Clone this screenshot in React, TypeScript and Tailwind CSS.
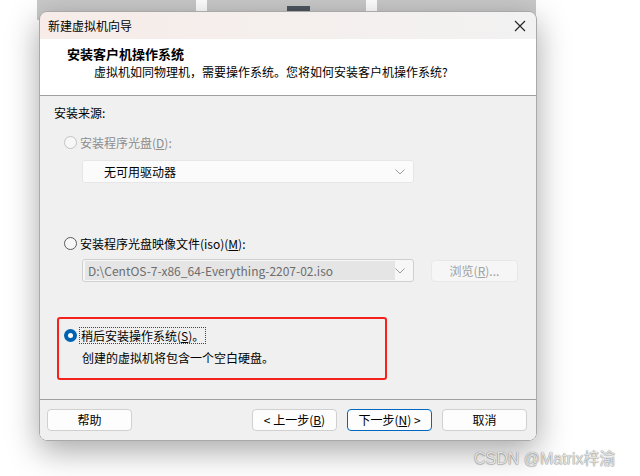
import React from "react"

const font = { fontFamily: '"Noto Sans CJK SC", "Noto Sans", sans-serif' }

const Radio = ({ checked, disabled }: { checked?: boolean; disabled?: boolean }) => {
    if (checked) {
        return (
            <span className="flex h-[13px] w-[13px] shrink-0 items-center justify-center rounded-full bg-[#0063b1]">
                <span className="h-[5px] w-[5px] rounded-full bg-white" />
            </span>
        )
    }
    return (
        <span
            className={
                disabled
                    ? "h-[13px] w-[13px] shrink-0 rounded-full border border-[#c2c2c2] bg-[#f7f7f7]"
                    : "h-[13px] w-[13px] shrink-0 rounded-full border border-[#5a5a5a] bg-[#f7f7f7]"
            }
        />
    )
}

const Chevron = () => (
    <svg width="10" height="6" viewBox="0 0 10 6" className="shrink-0">
        <path d="M0.5 0.5 L5 5 L9.5 0.5" fill="none" stroke="#9a9a9a" strokeWidth="1" />
    </svg>
)

const Button = ({ children, primary }: { children: React.ReactNode; primary?: boolean }) => (
    <button
        className={
            primary
                ? "flex h-[22px] w-[85px] items-center justify-center rounded-[4px] border border-[#0067c0] bg-[#fdfdfd] text-[12px] text-black"
                : "flex h-[22px] w-[85px] items-center justify-center rounded-[4px] border border-[#d0d0d0] bg-[#fdfdfd] text-[12px] text-black"
        }
    >
        {children}
    </button>
)

export default function App() {
    return (
        <div className="relative h-[476px] w-[640px] overflow-hidden bg-white" style={font}>
            {/* windows behind the dialog */}
            <div className="flex h-[20px] gap-[11px] pl-[37px]">
                <div className="w-[159px] bg-[#c9c9c9]" />
                <div className="relative w-[159px] bg-[#c9c9c9]">
                    <div className="absolute left-[80px] top-[6px] h-[14px] w-[23px] bg-[#4d5560]" />
                </div>
                <div className="w-[159px] bg-[#c9c9c9]" />
            </div>

            <div className="absolute left-[39px] top-[11px] flex h-[430px] w-[498px] flex-col overflow-hidden rounded-[8px] border border-[#a9a9a9] shadow-[0_10px_32px_rgba(0,0,0,0.35)]">
                {/* title bar */}
                <div className="flex h-[27px] shrink-0 items-center justify-between bg-gradient-to-r from-[#f7ece8] to-[#f2f2f2] pl-[8px] pr-[10px]">
                    <span className="text-[12px] text-black">新建虚拟机向导</span>
                    <svg width="12" height="12" viewBox="0 0 12 12">
                        <path d="M1 1 L11 11 M11 1 L1 11" stroke="#222" strokeWidth="1.1" />
                    </svg>
                </div>

                {/* header */}
                <div className="h-[57px] shrink-0 border-b border-[#a0a0a0] bg-white pl-[27px] pt-[6px]">
                    <div className="text-[13px] font-bold leading-[18px] text-black">安装客户机操作系统</div>
                    <div className="pl-[27px] text-[12px] leading-[18px] text-black">
                        虚拟机如同物理机，需要操作系统。您将如何安装客户机操作系统?
                    </div>
                </div>

                {/* body */}
                <div className="flex flex-1 flex-col bg-[#f0f0f0] pl-[14px]">
                    <div className="mt-[8px] text-[12px] leading-[17px] text-black">安装来源:</div>

                    <div className="mt-[13px] flex items-center gap-[3px] pl-[10px] text-[12px] leading-[17px] text-[#8d8d8d]">
                        <Radio disabled />
                        <span>
                            安装程序光盘(<span className="underline">D</span>):
                        </span>
                    </div>
                    <div className="ml-[28px] mt-[9px] flex h-[23px] w-[332px] items-center justify-between rounded-[3px] border border-[#e6e6e6] bg-[#fbfbfb] pl-[21px] pr-[8px] text-[12px] text-black">
                        <span>无可用驱动器</span>
                        <Chevron />
                    </div>

                    <div className="mt-[52px] flex items-center gap-[3px] pl-[10px] text-[12px] leading-[17px] text-black">
                        <Radio />
                        <span>
                            安装程序光盘映像文件(iso)(<span className="underline">M</span>):
                        </span>
                    </div>
                    <div className="mt-[7px] flex items-center gap-[17px]">
                        <div className="ml-[28px] flex h-[23px] w-[332px] items-center justify-between rounded-[3px] border border-[#cfcfcf] bg-[#f7f7f7] pl-[2px] pr-[8px]">
                            <span className="flex h-[19px] w-[310px] items-center bg-[#e5e5e5] pl-[3px] text-[12px] text-[#6d6d6d]">
                                D:\CentOS-7-x86_64-Everything-2207-02.iso
                            </span>
                            <Chevron />
                        </div>
                        <div className="flex h-[22px] w-[87px] items-center justify-center rounded-[4px] border border-[#e8e8e8] bg-[#f6f6f6] text-[12px] text-[#a0a0a0]">
                            浏览(<span className="underline">R</span>)...
                        </div>
                    </div>

                    <div className="ml-[3px] mt-[35px] h-[63px] w-[330px] rounded-[3px] border-[2px] border-[#f5211c] pl-[5px] pt-[8px]">
                        <div className="flex items-center gap-[2px] text-[12px] leading-[17px] text-black">
                            <Radio checked />
                            <span className="border border-dotted border-[#444] px-[1px] leading-[15px]">
                                稍后安装操作系统(<span className="underline">S</span>)。
                            </span>
                        </div>
                        <div className="mt-[5px] pl-[18px] text-[12px] leading-[17px] text-black">
                            创建的虚拟机将包含一个空白硬盘。
                        </div>
                    </div>
                </div>

                {/* footer */}
                <div className="flex h-[41px] shrink-0 items-start border-t border-[#a0a0a0] bg-[#f0f0f0] pl-[7px] pt-[9px]">
                    <Button>帮助</Button>
                    <div className="ml-[120px] flex gap-[10px]">
                        <Button>
                            &lt; 上一步(<span className="underline">B</span>)
                        </Button>
                        <Button primary>
                            下一步(<span className="underline">N</span>) &gt;
                        </Button>
                        <Button>取消</Button>
                    </div>
                </div>
            </div>

            <div
                className="absolute left-[474px] top-[447px] text-[16px] font-normal text-[#e4e4e4]"
                style={{
                    fontFamily: '"Liberation Sans", "Noto Sans CJK SC", sans-serif',
                    textShadow: "0 0 1px rgba(0,0,0,0.55), 0 1px 1px rgba(0,0,0,0.2)",
                }}
            >
                CSDN @Matrix梓渝
            </div>
        </div>
    )
}
